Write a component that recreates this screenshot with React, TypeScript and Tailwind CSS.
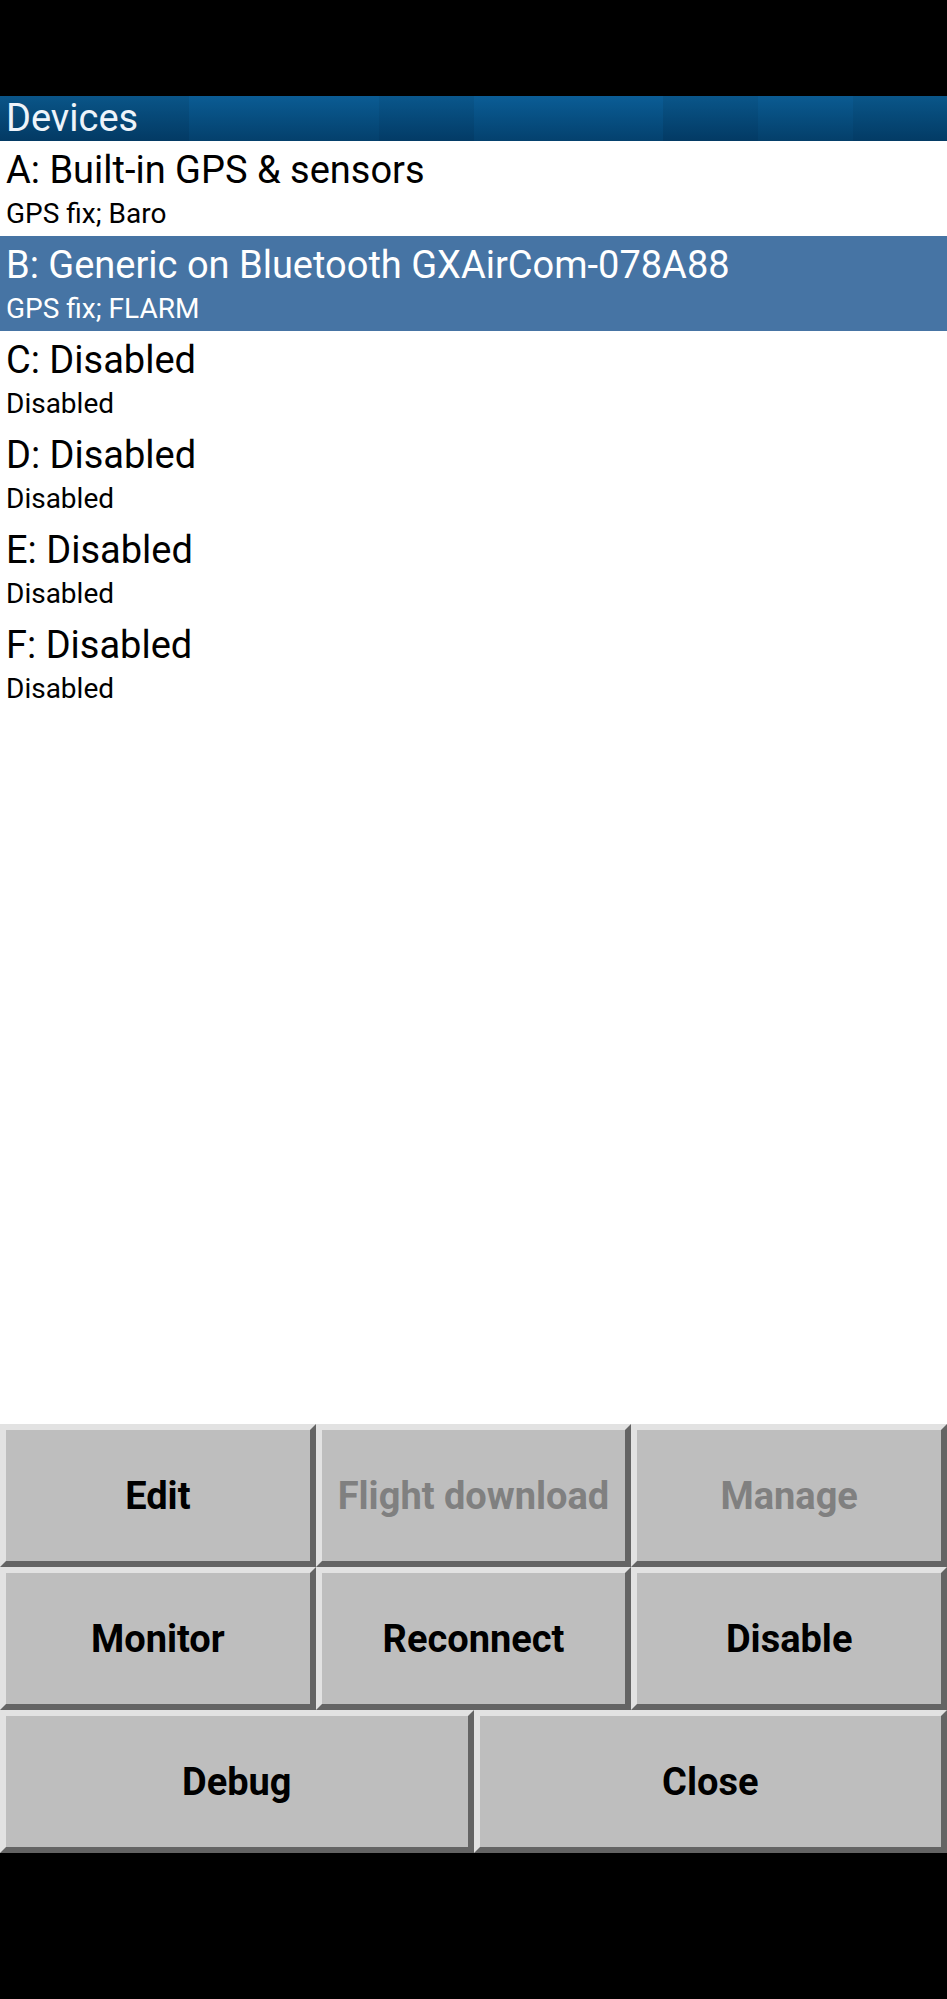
import React from "react";

const rows = [
  { title: "A: Built-in GPS & sensors", sub: "GPS fix; Baro", selected: false },
  { title: "B: Generic on Bluetooth GXAirCom-078A88", sub: "GPS fix; FLARM", selected: true },
  { title: "C: Disabled", sub: "Disabled", selected: false },
  { title: "D: Disabled", sub: "Disabled", selected: false },
  { title: "E: Disabled", sub: "Disabled", selected: false },
  { title: "F: Disabled", sub: "Disabled", selected: false },
];

function Btn({ label, disabled }: { label: string; disabled?: boolean }) {
  return (
    <div
      className={
        "h-[143px] flex items-center justify-center bg-[#bebebe] border-[6px] border-t-[#e2e2e2] border-l-[#e2e2e2] border-b-[#646464] border-r-[#646464] text-[38px] font-bold leading-none " +
        (disabled ? "text-[#808080]" : "text-black")
      }
    >
      {label}
    </div>
  );
}

export default function App() {
  return (
    <div className="w-[947px] h-[1999px] flex flex-col bg-black" style={{ fontFamily: "Roboto, 'Noto Sans', sans-serif" }}>
      <div className="h-[96px] bg-black" />
      <div className="relative h-[45px]">
        <div className="absolute inset-0 flex">
          <div className="w-[189px] bg-gradient-to-b from-[#0a5588] to-[#033a64]" />
          <div className="w-[190px] bg-gradient-to-b from-[#0b5c94] to-[#04406c]" />
          <div className="w-[95px] bg-gradient-to-b from-[#0a578c] to-[#033b66]" />
          <div className="w-[189px] bg-gradient-to-b from-[#0b5d96] to-[#04416e]" />
          <div className="w-[95px] bg-gradient-to-b from-[#0a568a] to-[#033a64]" />
          <div className="w-[95px] bg-gradient-to-b from-[#0b5b92] to-[#043f6a]" />
          <div className="flex-1 bg-gradient-to-b from-[#0a5689] to-[#033b65]" />
        </div>
        <div className="relative pl-[6px] text-[38px] leading-[44px] text-[#eef4fa]">Devices</div>
      </div>
      <div className="flex-1 bg-white flex flex-col">
        {rows.map((r) => (
          <div
            key={r.title}
            className={
              "h-[95px] pl-[6px] pt-[7px] flex flex-col " +
              (r.selected ? "bg-[#4674a4] text-white" : "bg-white text-black")
            }
          >
            <div className="text-[38px] leading-[44px] whitespace-nowrap">{r.title}</div>
            <div className="text-[28px] leading-[32px] mt-[6px] whitespace-nowrap">{r.sub}</div>
          </div>
        ))}
      </div>
      <div className="bg-white">
        <div className="grid grid-cols-3">
          <Btn label="Edit" />
          <Btn label="Flight download" disabled />
          <Btn label="Manage" disabled />
          <Btn label="Monitor" />
          <Btn label="Reconnect" />
          <Btn label="Disable" />
        </div>
        <div className="grid grid-cols-2">
          <Btn label="Debug" />
          <Btn label="Close" />
        </div>
      </div>
      <div className="h-[146px] bg-black" />
    </div>
  );
}
